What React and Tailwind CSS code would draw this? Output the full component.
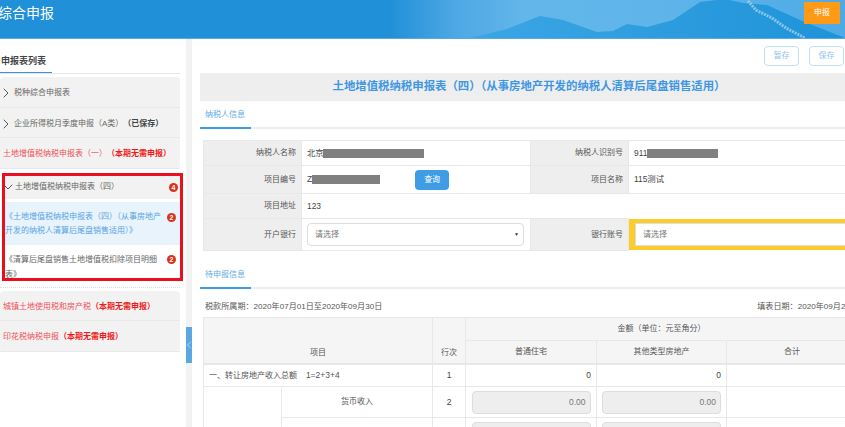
import { ChevronLeft, ChevronRight, ChevronDown } from 'lucide-react';

const FONT = "font-['Liberation_Sans','Noto_Sans_CJK_SC',sans-serif]";

function Badge({ children, className = '' }) {
  return (
    <span className={`flex h-[9px] w-[9px] shrink-0 items-center justify-center rounded-full bg-[#d9331a] text-[7px] font-bold leading-none text-white ${className}`}>
      {children}
    </span>
  );
}

function SideItem({ children, last }) {
  return (
    <div className={`flex h-[30.5px] items-center pt-[3px] text-[8px] text-[#666] ${last ? '' : 'border-b border-[#e8e8e8]'}`}>
      <ChevronRight className="-ml-[2px] h-4 w-4 shrink-0 text-[#555]" strokeWidth={1.5} />
      {children}
    </div>
  );
}

function RedItem({ name, bold }) {
  return (
    <div className="flex h-[30.5px] items-center border-b border-[#e8e8e8] pl-[3px] pt-[3px] text-[8px] text-[#f0505a]">
      {name}
      <span className="font-bold text-[#f21a1a]">{bold}</span>
    </div>
  );
}

function Sidebar() {
  return (
    <aside className="w-[186px] shrink-0 pr-[6px]">
      <div className="h-[35px] border-b border-[#e6e6e6]">
        <div className="h-[34px] w-[52px] border-b-[1.5px] border-[#3d8fe0] pl-px pt-[15px] text-[9px] font-bold leading-[14px] text-[#444]">
          申报表列表
        </div>
      </div>
      <div className="mt-[3px] rounded-sm bg-[#f2f2f2]">
        <SideItem>税种综合申报表</SideItem>
        <SideItem>
          企业所得税月季度申报（A类）<span className="font-bold text-[#444]">（已保存）</span>
        </SideItem>
        <RedItem name="土地增值税纳税申报表（一）" bold="（本期无需申报）" />
      </div>

      <div className="-mr-[3px] ml-[2px] mt-[4px] h-[108px] overflow-hidden border-[3px] border-[#e8101e] bg-white">
        <div className="flex h-[23px] items-center bg-[#f2f2f2] pr-[2px] text-[8px] text-[#666]">
          <ChevronDown className="-mr-[1px] -ml-[5px] h-4 w-4 shrink-0 text-[#555]" strokeWidth={1.5} />
          <span className="flex-1">土地增值税纳税申报表（四）</span>
          <Badge>4</Badge>
        </div>
        <div className="mt-[3px] flex h-[43px] items-start bg-[#e8f3fc] pr-[4px] pt-[8px] text-[8px] leading-[14px] text-[#58a4e4]">
          <span className="flex-1">《土地增值税纳税申报表（四）（从事房地产开发的纳税人清算后尾盘销售适用）》</span>
          <Badge className="mt-[3px]">2</Badge>
        </div>
        <div className="flex h-[36px] items-start pr-[4px] pt-[7px] text-[8px] leading-[15px] text-[#666]">
          <span className="flex-1">《清算后尾盘销售土地增值税扣除项目明细表》</span>
          <Badge className="mt-[3px]">2</Badge>
        </div>
      </div>

      <div className="mt-[6px] border-t border-dotted border-[#ddd]" />
      <div className="mt-[3px] rounded-sm bg-[#f2f2f2]">
        <RedItem name="城镇土地使用税和房产税" bold="（本期无需申报）" />
        <RedItem name="印花税纳税申报" bold="（本期无需申报）" />
      </div>
    </aside>
  );
}

function SectionTab({ children }) {
  return (
    <div className="h-[28px] border-b-2 border-[#eeeeee]">
      <div className="h-[28px] w-[51px] border-b-2 border-[#3d9ae4] pl-[5px] pt-[8px] text-[8px] leading-[12px] text-[#62ace6]">
        {children}
      </div>
    </div>
  );
}

function Redacted({ className }) {
  return <span className={`inline-block h-[9px] bg-[#808080] align-middle ${className}`} />;
}

function Label({ children }) {
  return (
    <td className="border border-[#e8e8e8] bg-[#eeeeee] pr-[5px] text-right text-[8px] text-[#555]">
      {children}
    </td>
  );
}

function Value({ children, className = '' }) {
  return <td className={`border border-[#e8e8e8] pl-[5px] text-[8.4px] text-[#444] ${className}`}>{children}</td>;
}

function InfoTable() {
  return (
    <table className="ml-[3px] mt-[11px] w-[655px] table-fixed border-collapse">
      <colgroup>
        <col className="w-[98px]" />
        <col className="w-[229px]" />
        <col className="w-[98px]" />
        <col />
      </colgroup>
      <tbody>
        <tr className="h-[25px]">
          <Label>纳税人名称</Label>
          <Value>北京<Redacted className="-ml-px w-[101px]" /></Value>
          <Label>纳税人识别号</Label>
          <Value>911<Redacted className="w-[71px]" /></Value>
        </tr>
        <tr className="h-[28px]">
          <Label>项目编号</Label>
          <Value>
            Z<Redacted className="w-[68px]" />
            <button className="ml-[35px] h-[20px] w-[34px] rounded-sm bg-[#3f9de6] text-[8px] text-white">查询</button>
          </Value>
          <Label>项目名称</Label>
          <Value>115测试</Value>
        </tr>
        <tr className="h-[25px]">
          <Label>项目地址</Label>
          <Value className="border-r-0">123</Value>
          <td />
          <td />
        </tr>
        <tr className="h-[32px]">
          <Label>开户银行</Label>
          <Value>
            <div className="flex h-[23px] w-[217px] items-center justify-between rounded-sm border border-[#ddd] pl-[7px] pr-[4px] text-[8px] text-[#777]">
              请选择
              <span className="text-[5px] text-[#333]">▼</span>
            </div>
          </Value>
          <Label>银行账号</Label>
          <td className="p-0">
            <div className="bg-[#fccb2c] py-[4px] pl-[6px]">
              <div className="flex h-[23px] items-center border border-[#ddd] bg-white pl-[7px] text-[8px] text-[#777]">请选择</div>
            </div>
          </td>
        </tr>
      </tbody>
    </table>
  );
}

const cell = 'border border-[#e8e8e8] text-center text-[8px] text-[#555]';
const num = 'border border-[#e8e8e8] text-[8.5px] text-[#444]';

function AmountInput() {
  return (
    <div className="mx-auto flex h-[23px] w-[119px] items-center justify-end rounded-sm border border-[#dddddd] bg-[#eeeeee] pr-[4px] text-[8.5px] text-[#777]">
      0.00
    </div>
  );
}

function DeclareTable() {
  return (
    <table className="ml-[3px] mt-[2px] w-[655px] table-fixed border-collapse">
      <colgroup>
        <col className="w-[78px]" />
        <col className="w-[151px]" />
        <col className="w-[33px]" />
        <col className="w-[131px]" />
        <col className="w-[130px]" />
        <col />
      </colgroup>
      <tbody>
        <tr className="h-[23px] bg-[#f5f5f5]">
          <td colSpan={2} rowSpan={2} className={`${cell} align-bottom pb-[4px] border-b-2`}>项目</td>
          <td rowSpan={2} className={`${cell} align-bottom pb-[4px] border-b-2`}>行次</td>
          <td colSpan={3} className={cell}>金额（单位：元至角分）</td>
        </tr>
        <tr className="h-[23px] bg-[#f5f5f5]">
          <td className={`${cell} border-b-2`}>普通住宅</td>
          <td className={`${cell} border-b-2`}>其他类型房地产</td>
          <td className={`${cell} border-b-2`}>合计</td>
        </tr>
        <tr className="h-[23px]">
          <td colSpan={2} className={`${cell} whitespace-pre pl-[5px] !text-left`}>一、转让房地产收入总额    <span className="text-[8.5px]">1=2+3+4</span></td>
          <td className={`${num} text-center`}>1</td>
          <td className={`${num} pr-[5px] text-right`}>0</td>
          <td className={`${num} pr-[5px] text-right`}>0</td>
          <td className={cell} />
        </tr>
        <tr className="h-[31px]">
          <td rowSpan={2} className={cell} />
          <td className={cell}>货币收入</td>
          <td className={`${num} text-center`}>2</td>
          <td className={cell}><AmountInput /></td>
          <td className={cell}><AmountInput /></td>
          <td className={cell} />
        </tr>
        <tr className="h-[31px]">
          <td className={cell}>实物收入及其他收入</td>
          <td className={`${num} text-center`}>3</td>
          <td className={cell}><AmountInput /></td>
          <td className={cell}><AmountInput /></td>
          <td className={cell} />
        </tr>
      </tbody>
    </table>
  );
}

function Header() {
  return (
    <header className="relative h-[39px] overflow-hidden border-b border-[#58a9e4] bg-[linear-gradient(90deg,#2090d8_0%,#2090d8_46%,#4ea8e3_54%,#62b6ea_62%,#5fb5ea_78%,#4eaae5_100%)]">
      <svg className="absolute inset-0" width="845" height="39" viewBox="0 0 845 39">
        <defs>
          <linearGradient id="ridge" x1="0" y1="0" x2="1" y2="0">
            <stop offset="0" stopColor="#3ca6e4" />
            <stop offset="1" stopColor="#1f93d9" />
          </linearGradient>
        </defs>
        <path d="M470 38 L507 29 L540 16 L563 20 L597 32 L613 31 L627 24 L647 27 L673 20 L700 2 L725 -1 L743 3 L767 5 L800 20 L845 38 L845 39 L470 39 Z" fill="url(#ridge)" />
        <path d="M748 1 L756 10 L772 18 L786 28 L805 38" fill="none" stroke="#a9d5ee" strokeOpacity="0.75" strokeWidth="3" strokeDasharray="2 1" />
      </svg>
      <div className="absolute left-[-2px] top-[3px] text-[14px] leading-[20px] text-white">综合申报</div>
      <button className="absolute left-[804px] top-[2px] h-[22px] w-[36px] bg-[#fe9a16] text-[8px] text-white">申报</button>
    </header>
  );
}

export default function App() {
  return (
    <div className={`h-[427px] w-[845px] overflow-hidden bg-white ${FONT}`}>
      <Header />
      <div className="flex h-[388px]">
        <Sidebar />
        <div className="relative w-[6px] shrink-0 bg-[#f2f2f2]">
          <div className="absolute left-0 top-[288px] flex h-[36px] w-[6px] items-center justify-center overflow-hidden bg-[#5ba8e0] text-[#cfe6f7]">
            <ChevronLeft className="h-3 w-3 shrink-0" strokeWidth={1.5} />
          </div>
        </div>
        <main className="ml-[8px] w-[658px] shrink-0">
          <div className="flex h-[34px] justify-end gap-[10px] pr-[14px] pt-[7px]">
            <button className="h-[20px] w-[35px] rounded-sm border-[1.5px] border-[#bddff8] text-[8px] text-[#90c4ee]">暂存</button>
            <button className="h-[20px] w-[35px] rounded-sm border-[1.5px] border-[#bddff8] text-[8px] text-[#90c4ee]">保存</button>
          </div>
          <h1 className="flex h-[28px] items-center justify-center bg-[#eeeeee] text-[11.4px] font-bold text-[#3f97e2]">
            土地增值税纳税申报表（四）（从事房地产开发的纳税人清算后尾盘销售适用）
          </h1>
          <SectionTab>纳税人信息</SectionTab>
          <InfoTable />
          <div className="mt-[10px]">
            <SectionTab>待申报信息</SectionTab>
          </div>
          <div className="flex h-[26px] items-center justify-between pl-[5px] pt-[10px] text-[8.1px] text-[#555]">
            <span>税款所属期：2020年07月01日至2020年09月30日</span>
            <span>填表日期：2020年09月24日</span>
          </div>
          <DeclareTable />
        </main>
      </div>
    </div>
  );
}
